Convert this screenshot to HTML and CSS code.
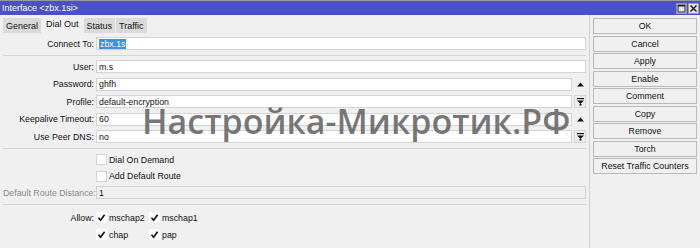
FILE: index.html
```html
<!DOCTYPE html>
<html>
<head>
<meta charset="utf-8">
<link rel="stylesheet" href="styles.css">
</head>
<body>
<div class="window">
  <div class="titlebar">
    <span class="title">Interface &lt;zbx.1si&gt;</span>
    <div class="wbtns">
      <span class="wbtn"><svg width="9" height="9" viewBox="0 0 9 9"><rect x="1" y="1" width="7" height="7" fill="none" stroke="#222" stroke-width="1"/><rect x="1" y="1" width="7" height="1.5" fill="#222"/></svg></span>
      <span class="wbtn"><svg width="9" height="9" viewBox="0 0 9 9"><path d="M1.5 1.5 L7.5 7.5 M7.5 1.5 L1.5 7.5" stroke="#222" stroke-width="1.6"/></svg></span>
    </div>
  </div>
  <div class="main">
    <div class="left">
      <div class="tabs">
        <span class="tab">General</span>
        <span class="tab active">Dial Out</span>
        <span class="tab">Status</span>
        <span class="tab">Traffic</span>
      </div>
      <div class="form">
        <div class="section s1">
          <div class="row">
            <span class="label">Connect To:</span>
            <div class="field"><span class="sel">zbx.1s</span></div>
          </div>
        </div>
        <div class="section s2">
          <div class="row">
            <span class="label">User:</span>
            <div class="field">m.s</div>
          </div>
          <div class="row">
            <span class="label">Password:</span>
            <div class="field">ghfh</div>
            <span class="spin"><svg width="7" height="5" viewBox="0 0 7 5"><polygon points="0,4.5 7,4.5 3.5,0.5" fill="#111"/></svg></span>
          </div>
          <div class="row">
            <span class="label">Profile:</span>
            <div class="field">default-encryption</div>
            <span class="drop"><svg width="7" height="8" viewBox="0 0 7 8"><rect x="0" y="0" width="7" height="1.2" fill="#111"/><polygon points="0,2.5 7,2.5 3.5,6" fill="#111"/><rect x="2.5" y="6" width="2" height="1.5" fill="#111"/></svg></span>
          </div>
          <div class="row">
            <span class="label">Keepalive Timeout:</span>
            <div class="field">60</div>
            <span class="spin"><svg width="7" height="5" viewBox="0 0 7 5"><polygon points="0,4.5 7,4.5 3.5,0.5" fill="#111"/></svg></span>
          </div>
          <div class="row">
            <span class="label">Use Peer DNS:</span>
            <div class="field">no</div>
            <span class="drop"><svg width="7" height="8" viewBox="0 0 7 8"><rect x="0" y="0" width="7" height="1.2" fill="#111"/><polygon points="0,2.5 7,2.5 3.5,6" fill="#111"/><rect x="2.5" y="6" width="2" height="1.5" fill="#111"/></svg></span>
          </div>
        </div>
        <div class="section s3">
          <div class="row">
            <span class="label"></span>
            <span class="check"></span><span class="ctext">Dial On Demand</span>
          </div>
          <div class="row">
            <span class="label"></span>
            <span class="check"></span><span class="ctext">Add Default Route</span>
          </div>
          <div class="row">
            <span class="label dim">Default Route Distance:</span>
            <div class="field">1</div>
          </div>
        </div>
        <div class="section s4">
          <div class="row">
            <span class="label">Allow:</span>
            <span class="opt"><span class="check on"><svg width="9" height="9" viewBox="0 0 9 9"><path d="M1.5 4.8 L3.6 7.2 L7.6 1.8" fill="none" stroke="#111" stroke-width="1.7"/></svg></span><span class="ctext">mschap2</span></span>
            <span class="opt"><span class="check on"><svg width="9" height="9" viewBox="0 0 9 9"><path d="M1.5 4.8 L3.6 7.2 L7.6 1.8" fill="none" stroke="#111" stroke-width="1.7"/></svg></span><span class="ctext">mschap1</span></span>
          </div>
          <div class="row">
            <span class="label"></span>
            <span class="opt"><span class="check on"><svg width="9" height="9" viewBox="0 0 9 9"><path d="M1.5 4.8 L3.6 7.2 L7.6 1.8" fill="none" stroke="#111" stroke-width="1.7"/></svg></span><span class="ctext">chap</span></span>
            <span class="opt"><span class="check on"><svg width="9" height="9" viewBox="0 0 9 9"><path d="M1.5 4.8 L3.6 7.2 L7.6 1.8" fill="none" stroke="#111" stroke-width="1.7"/></svg></span><span class="ctext">pap</span></span>
          </div>
        </div>
      </div>
    </div>
    <div class="right">
      <span class="btn">OK</span>
      <span class="btn">Cancel</span>
      <span class="btn">Apply</span>
      <span class="btn">Enable</span>
      <span class="btn">Comment</span>
      <span class="btn">Copy</span>
      <span class="btn">Remove</span>
      <span class="btn">Torch</span>
      <span class="btn">Reset Traffic Counters</span>
    </div>
  </div>
  <div class="watermark">Настройка-Микротик.РФ</div>
</div>
</body>
</html>
```

FILE: styles.css
```css
* { box-sizing: border-box; }
html, body { margin: 0; padding: 0; }
body {
  width: 700px;
  height: 248px;
  overflow: hidden;
  background: #f0f0f0;
  font-family: "Liberation Sans", Arial, sans-serif;
  font-size: 8.8px;
  color: #111;
}
.window {
  position: relative;
  width: 700px;
  height: 248px;
}
.titlebar {
  height: 15px;
  background: #4a4fcb;
  border-top: 1px solid #9a9a9a;
  display: flex;
  align-items: center;
  justify-content: space-between;
  color: #fff;
}
.title {
  padding-left: 2px;
  font-size: 9px;
}
.wbtns {
  display: flex;
  gap: 1px;
  padding-right: 1px;
}
.wbtn {
  width: 11px;
  height: 11px;
  background: #e4e4e4;
  border: 1px solid #9a9a9a;
  display: flex;
  align-items: center;
  justify-content: center;
}
.main {
  display: flex;
  height: 233px;
}
.left {
  width: 590px;
  border-right: 1px solid #d2d2d2;
}
.tabs {
  display: flex;
  align-items: flex-end;
  height: 18px;
  padding-left: 3px;
  gap: 1px;
}
.tab {
  height: 15px;
  display: flex;
  align-items: center;
  padding: 0 3px;
  background: #dadada;
  font-size: 9px;
}
.tab.active {
  height: 18px;
  background: #f0f0f0;
  padding: 0 4px;
}
.form {
  padding: 0 3px;
}
.section {
  display: flex;
  flex-direction: column;
  border-bottom: 1px solid #d6d6d6;
}
.s1 { padding: 4px 0 5px; }
.s2 { padding: 4px 0 5px; gap: 4.5px; }
.s3 { padding: 4px 0 5px; gap: 3.5px; }
.s4 { padding: 6px 0 0; gap: 4px; border-bottom: none; }
.row {
  display: flex;
  align-items: center;
  height: 13px;
}
.label {
  width: 93px;
  flex: none;
  text-align: right;
  padding-right: 2px;
  white-space: nowrap;
}
.label.dim { color: #8a8a8a; }
.field {
  flex: 1;
  height: 13px;
  background: #fff;
  border: 1px solid #d4d4d4;
  display: flex;
  align-items: center;
  padding-left: 2px;
  white-space: nowrap;
}
.s3 .field { background: #f0f0f0; border-color: #d0d0d0; }
.sel {
  background: #3b8fe6;
  color: #fff;
  padding: 0 1px;
  line-height: 10px;
}
.spin {
  width: 12px;
  height: 13px;
  margin-left: 2px;
  display: flex;
  align-items: center;
  justify-content: center;
}
.drop {
  width: 12px;
  height: 13px;
  margin-left: 2px;
  border: 1px solid #d4d4d4;
  background: #f0f0f0;
  display: flex;
  align-items: center;
  justify-content: center;
}
.check {
  width: 11px;
  height: 11px;
  flex: none;
  background: #fff;
  border: 1px solid #d4d4d4;
  display: flex;
  align-items: center;
  justify-content: center;
}
.check.on { border: none; }
.ctext { padding-left: 2px; }
.opt {
  display: flex;
  align-items: center;
  width: 53px;
}
.right {
  display: flex;
  flex-direction: column;
  padding: 3px 0 0 3px;
  gap: 1.5px;
}
.btn {
  width: 104px;
  height: 16px;
  border: 1px solid #b9b9b9;
  background: #f0f0f0;
  display: flex;
  align-items: center;
  justify-content: center;
  white-space: nowrap;
}
.watermark {
  position: absolute;
  left: 142px;
  top: 98px;
  font-family: "Open Sans", sans-serif;
  font-weight: 600;
  font-size: 34px;
  color: rgba(100, 100, 100, 0.88);
  white-space: nowrap;
  line-height: 46px;
  pointer-events: none;
}
```
